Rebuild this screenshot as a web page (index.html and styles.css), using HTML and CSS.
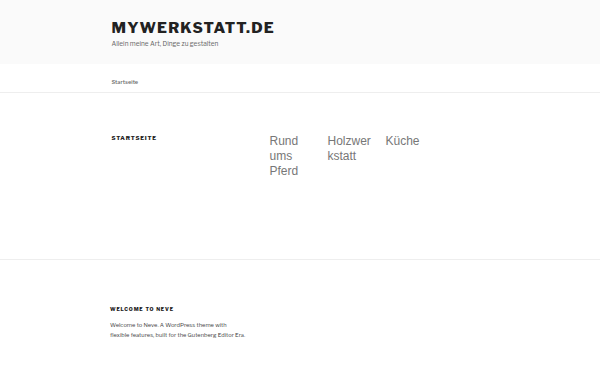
FILE: index.html
```html
<!DOCTYPE html>
<html lang="de">
<head>
  <meta charset="UTF-8" />
  <meta name="viewport" content="width=device-width, initial-scale=1.0"/>
  <title>MyWerkstatt.de</title>
  <link rel="stylesheet" href="styles.css">
</head>
<body>
  <header class="site-header">
    <div class="wrap">
      <h1 class="site-title">MyWerkstatt.de</h1>
      <p class="site-desc">Allein meine Art, Dinge zu gestalten</p>
    </div>
  </header>
  <nav class="main-nav">
    <div class="wrap">
      <a href="#">Startseite</a>
    </div>
  </nav>
  <main class="content">
    <div class="wrap content-row">
      <h2 class="page-title">Startseite</h2>
      <div class="columns">
        <p class="col">Rund ums Pferd</p>
        <p class="col">Holzwerkstatt</p>
        <p class="col">Küche</p>
      </div>
    </div>
  </main>
  <footer class="site-footer">
    <div class="wrap">
      <h3 class="widget-title">Welcome to Neve</h3>
      <p class="widget-text">Welcome to Neve. A WordPress theme with<br>flexible features, built for the Gutenberg Editor Era.</p>
    </div>
  </footer>
</body>
</html>
```

FILE: styles.css
```css
body {
  margin: 0;
  font-family: "Libre Franklin", Inter, "Liberation Sans", sans-serif;
  color: #333;
  background: #fff;
}
.wrap {
  width: 378px;
  margin: 0 auto;
  padding-left: 1px;
}
.site-header {
  background: #fafafa;
  height: 64px;
  box-sizing: border-box;
  padding-top: 19px;
}
.site-title {
  margin: 0;
  font-size: 15px;
  font-weight: 800;
  letter-spacing: 0.08em;
  text-transform: uppercase;
  color: #222;
  line-height: 19px;
}
.site-desc {
  margin: 2px 0 0;
  font-size: 6.5px;
  color: #666;
}
.main-nav {
  height: 28px;
  border-bottom: 1px solid #eee;
  display: flex;
  align-items: center;
}
.main-nav a {
  font-size: 5.7px;
  font-weight: 500;
  color: #666;
  text-decoration: none;
}
.content {
  height: 166px;
  border-bottom: 1px solid #eee;
}
.content-row {
  display: flex;
  padding-top: 41px;
}
.page-title {
  margin: 0;
  width: 158px;
  font-size: 5.8px;
  font-weight: 800;
  letter-spacing: 0.14em;
  text-transform: uppercase;
  color: #222;
}
.columns {
  display: flex;
  gap: 12px;
}
.col {
  margin: 0;
  width: 46px;
  font-family: "Liberation Sans", Arial, sans-serif;
  font-size: 12px;
  line-height: 15px;
  color: #777;
  overflow-wrap: break-word;
}
.site-footer {
  padding-top: 46px;
}
.site-footer .wrap {
  padding-left: 0;
  width: 380px;
}
.widget-title {
  margin: 0 0 8px;
  font-size: 5.1px;
  font-weight: 800;
  letter-spacing: 0.16em;
  text-transform: uppercase;
  color: #222;
}
.widget-text {
  margin: 0;
  font-size: 5.75px;
  line-height: 10px;
  color: #444;
}
```
